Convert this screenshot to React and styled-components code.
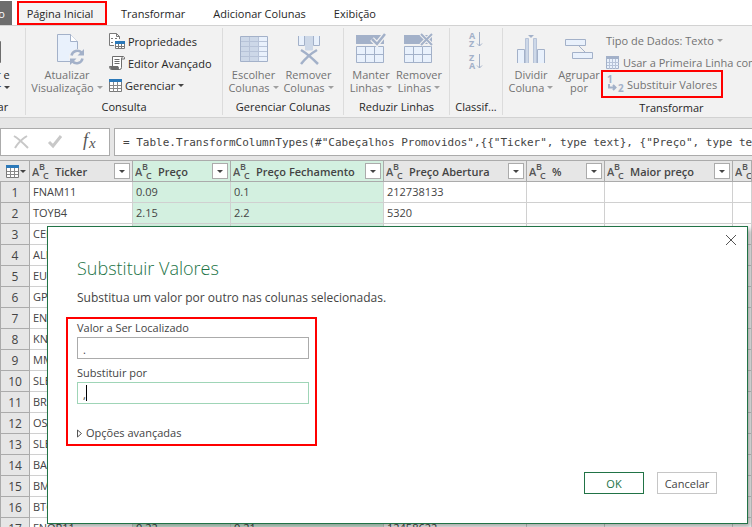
import React, { useState } from "react";
import styled, { createGlobalStyle, css } from "styled-components";

const line = "#a3b1c9";
const pale = "#e9f1fc";
const mid = "#cdd8e8";

const GlobalStyle = createGlobalStyle`
  * {
    box-sizing: border-box;
  }
  body {
    margin: 0;
    overflow: hidden;
    background: #e6e6e6;
  }
  body, button, input, table {
    font-family: "Open Sans", "Noto Sans", sans-serif;
    font-size: 11px;
    color: #262626;
  }
  button {
    border: 0;
    padding: 0;
    background: transparent;
  }
  svg {
    display: block;
    flex: none;
  }
`;

const Window = styled.div`
  position: relative;
  height: 100vh;
  overflow: hidden;
  display: flex;
  flex-direction: column;
`;

const Tabs = styled.nav`
  display: flex;
  flex: none;
  height: 26px;
  margin-left: -43px;
  padding-top: 1px;
  background: #fff;
  border-bottom: 1px solid #d2d2d2;
`;

const Tab = styled.button`
  flex: none;
  height: 24px;
  padding: 1px 14px 0;
  line-height: 23px;
  white-space: nowrap;

  ${(p) =>
    p.$file &&
    css`
      width: 55px;
      padding: 1px 8px 0;
      margin-right: 5px;
      text-align: right;
      color: #fff;
      background: #6d6d6d;
    `}

  ${(p) =>
    p.$active &&
    css`
      width: 90px;
      padding: 1px 4px 0 0;
      line-height: 19px;
      background: #f3f3f3;
      border: 2px solid #f00;
    `}
`;

const Ribbon = styled.div`
  display: flex;
  flex: none;
  height: 92px;
  margin-left: -43px;
  background: #f2f2f2;
  border-bottom: 1px solid #d2d2d2;
`;

const Group = styled.section`
  flex: none;
  display: flex;
  flex-direction: column;
  width: ${(p) => p.$width}px;
  margin: 2px 0;
  padding-top: 2px;
  border-right: 1px solid #dcdcdc;
`;

const GroupBody = styled.div`
  display: flex;
  height: 68px;
  padding-left: 3px;
`;

const GroupTitle = styled.h2`
  margin: 2px 0 0;
  font-size: 11px;
  font-weight: 400;
  line-height: 16px;
  text-align: center;
  white-space: nowrap;
`;

const BigButton = styled.button`
  flex: none;
  display: flex;
  flex-direction: column;
  align-items: center;
  width: ${(p) => p.$width}px;
  padding-top: 2px;
  line-height: 13px;
  white-space: nowrap;
  color: ${(p) => (p.disabled ? "#737373" : "#262626")};

  svg {
    margin-bottom: 2px;
  }
`;

const Line = styled.span`
  display: flex;
  align-items: center;
  gap: 3px;
`;

const SmallList = styled.div`
  display: flex;
  flex-direction: column;
  align-items: flex-start;
  margin-left: 4px;
`;

const SmallButton = styled.button`
  display: flex;
  align-items: center;
  gap: 3px;
  height: 22px;
  white-space: nowrap;
  color: ${(p) => (p.disabled ? "#737373" : "#262626")};
`;

const MarkedButton = styled(SmallButton)`
  height: 28px;
  margin: -3px 0 0 -5px;
  padding: 0 4px;
  border: 2px solid #f00;
`;

const SortList = styled.div`
  display: flex;
  flex-direction: column;
  gap: 6px;
  width: 100%;
  padding: 2px 4px 0 0;
  align-items: center;
`;

const Arrow = styled.i`
  flex: none;
  border: 3px solid transparent;
  border-top-color: ${(p) => (p.$dark ? "#444" : "#a0a0a0")};
  border-bottom: 0;
`;

const FormulaBar = styled.div`
  flex: none;
  display: flex;
  gap: 4px;
  height: 42px;
  padding: 10px 0 4px;
`;

const FormulaTools = styled.div`
  flex: none;
  display: flex;
  align-items: center;
  justify-content: space-between;
  width: 110px;
  padding: 0 12px;
  background: #fff;
  border: 1px solid #ababab;
`;

const Formula = styled.input`
  flex: 1;
  min-width: 0;
  padding: 0 0 0 8px;
  border: 1px solid #ababab;
  border-right: 0;
  border-radius: 0;
  outline: 0;
  font-family: "DejaVu Sans Mono", monospace;
  color: #444;
  background: #fff;
`;

const Grid = styled.table`
  width: 100%;
  table-layout: fixed;
  border-spacing: 0;
  background: #fff;
  color: #444;
`;

const HeadCell = styled.th`
  height: 22px;
  padding: 0 2px;
  overflow: hidden;
  text-align: left;
  font-weight: 600;
  background: ${(p) => (p.$selected ? "#d3f0e0" : "#e6e6e6")};
  border: solid #ababab;
  border-width: 1px 1px 1px 0;
`;

const HeadContent = styled.div`
  display: flex;
  align-items: center;
  gap: 5px;
  height: 20px;
  white-space: nowrap;
`;

const Corner = styled(HeadContent)`
  gap: 1px;
  padding-left: 4px;
`;

const FilterButton = styled.button`
  flex: none;
  display: flex;
  align-items: center;
  justify-content: center;
  width: 16px;
  height: 16px;
  margin-left: auto;
  background: #fff;
  border: 1px solid #ababab;
`;

const RowHead = styled.th`
  height: 21px;
  padding: 1px 0 0;
  font-size: 12px;
  font-weight: 400;
  line-height: 19px;
  text-align: center;
  background: #e6e6e6;
  border: solid #ababab;
  border-width: 0 1px 1px;
`;

const Cell = styled.td`
  height: 21px;
  padding: 0 3px 1px;
  line-height: 19px;
  white-space: nowrap;
  overflow: hidden;
  background: ${(p) => (p.$selected ? "#d3f0e0" : "#fff")};
  border: solid #d0d0d0;
  border-width: 0 1px 1px 0;
`;

const Dialog = styled.div`
  position: absolute;
  top: 226px;
  left: 47px;
  right: 4px;
  padding: 28px 30px 29px 18px;
  color: #444;
  background: #fff;
  border: 1px solid #217346;
  box-shadow: 3px 3px 5px rgba(0, 0, 0, 0.35);
`;

const CloseButton = styled.button`
  position: absolute;
  top: 7px;
  right: 10px;
`;

const DialogTitle = styled.h1`
  margin: 0 0 0 11px;
  font-size: 18px;
  font-weight: 300;
  line-height: 26px;
  color: #217346;
`;

const DialogText = styled.p`
  margin: 8px 0 10px 11px;
  font-size: 12px;
  line-height: 18px;
`;

const Fields = styled.div`
  width: 251px;
  padding: 0 6px 2px 9px;
  border: 2px solid #f00;
`;

const Label = styled.label`
  display: block;
  line-height: 18px;
`;

const Field = styled.div`
  position: relative;
  margin-bottom: ${(p) => (p.$last ? 20 : 5)}px;
`;

const TextBox = styled.input`
  display: block;
  width: 100%;
  height: 22px;
  padding: 2px 5px 0;
  border: 1px solid ${(p) => (p.$focused ? "#9fd5b7" : "#ababab")};
  border-radius: 0;
  outline: 0;
  color: #444;
`;

const Caret = styled.i`
  position: absolute;
  top: 3px;
  left: 9px;
  width: 1px;
  height: 16px;
  background: #000;
`;

const Advanced = styled.button`
  display: flex;
  align-items: center;
  gap: 4px;
  line-height: 18px;
  color: #444;
`;

const Actions = styled.div`
  display: flex;
  justify-content: flex-end;
  gap: 13px;
  margin-top: 26px;
`;

const ActionButton = styled.button`
  width: 60px;
  height: 22px;
  color: ${(p) => (p.$primary ? "#217346" : "#444")};
  border: 1px solid ${(p) => (p.$primary ? "#217346" : "#c6c6c6")};
`;

const CloseApplyIcon = () => (
  <svg width="28" height="34" viewBox="0 0 28 34" fill="#fff" stroke="#6d6d6d">
    <path d="M1.5 9.5h25v21h-25z" />
  </svg>
);

const RefreshIcon = () => (
  <svg width="34" height="34" viewBox="-7 0 34 34" fill="none">
    <path d="M.5 2.5h13l7 7v20H.5z" fill={pale} stroke={line} />
    <path d="M13.500 2.500v7h7" fill="#fff" stroke={line} />
    <circle cx="20" cy="25" r="8" fill="#f2f2f2" />
    <path d="M14.500 23.500c1-5 7-6 10-3M25.500 26.500c-1 5-7 6-10 3" stroke={line} strokeWidth="2.500" />
    <path d="M27 17v6.500h-6.500zM13 33v-6.500h6.500z" fill={line} />
  </svg>
);

const PropertiesIcon = () => (
  <svg width="16" height="16" viewBox="0 0 16 16" fill="none" stroke="#7a7a7a">
    <path d="M5 12.500H.5V.5h7l3 3V6M7.500.5v3h3" fill="#fff" />
    <path d="M2 5.500h2M2 9.500h2M6 5.500h2" />
    <path d="M6.500 8.500h9v7h-9zM7 13.500h8M9.500 10v5.500M12.500 10v5.500" fill="#fff" />
    <path d="M6 8h10v3H6z" fill="#2b79b9" stroke="none" />
  </svg>
);

const EditorIcon = () => (
  <svg width="16" height="16" viewBox="0 0 16 16" fill="none" stroke="#6d6d6d">
    <path d="M3.500 11V1.500h11q1 0 1 2.500h-3v8.500q0 2-2 2h-8q-2 0-2-3h8.500q0 3 1.500 3M12.500 4q0-2 1.500-2.500" fill="#fff" />
    <path d="M1 12h8.500v2.500H2z" fill="#6d6d6d" stroke="none" />
    <path d="M5.500 4.500h5M5.500 6.500h5M5.500 8.500h5" />
  </svg>
);

const TableIcon = () => (
  <svg width="13" height="13" viewBox="0 0 13 13" fill="none">
    <path d="M.5.5h12v12H.5z" fill="#fff" stroke="#7a7a7a" />
    <path d="M1 6.500h11M1 9.500h11M4.500 3v9.500M8.500 3v9.500" stroke="#8a8a8a" />
    <path d="M0 0h13v3H0z" fill="#2b79b9" />
  </svg>
);

const ChooseColumnsIcon = () => (
  <svg width="28" height="34" viewBox="0 0 28 34" fill="none">
    <path d="M.5 4.500h27v25H.5z" fill={pale} />
    <path d="M1 5h18v24H1z" fill={mid} />
    <path d="M1 9.500h26M1 14.500h26M1 19.500h26M1 24.500h26M9.500 5v24M18.500 5v24" stroke="#b7c3d8" />
    <path d="M.5 4.500h27v25H.5z" stroke={line} />
  </svg>
);

const RemoveColumnsIcon = () => (
  <svg width="22" height="34" viewBox="0 0 22 34" fill="none">
    <path d="M.5 4v9.500h6V4M21.500 4v9.500h-6V4" fill={pale} stroke={line} />
    <path d="M7.500 4v14h7V4" fill={mid} stroke={mid} />
    <path d="M3 18c5 3 11 8 17 14" stroke={line} strokeWidth="2.500" />
    <path d="M19 18C12 22 7 27 3 32" stroke={line} strokeWidth="2.500" />
  </svg>
);

const RowsIcon = ({ remove }) => (
  <svg width="30" height="34" viewBox="0 0 30 34" fill="none">
    <path d="M0 3h28v9H0z" fill={line} />
    <path d="M.5 14.500h27v16H.5zM.5 22.500h27M9.500 15v15M18.500 15v15" fill={pale} stroke={line} />
    {remove ? (
      <>
        <path d="m17 2 11 11M28 2 17 13" stroke="#f2f2f2" strokeWidth="4" />
        <path d="m17 2 11 11M28 2 17 13" stroke={line} strokeWidth="2" />
      </>
    ) : (
      <>
        <path d="m16 7 5 5 8-10" stroke="#f2f2f2" strokeWidth="5" />
        <path d="m16 7 5 5 8-10" stroke={line} strokeWidth="2.500" />
      </>
    )}
  </svg>
);

const SortIcon = ({ letters }) => (
  <svg width="16" height="16" viewBox="0 0 16 16" fill={line} fontFamily="Open Sans" fontSize="9" fontWeight="700">
    <text x="1" y="7">{letters[0]}</text>
    <text x="1" y="15">{letters[1]}</text>
    <path d="M11.500 0v14M9 11.500l2.500 2.500 2.500-2.500" fill="none" stroke={line} />
  </svg>
);

const SplitIcon = () => (
  <svg width="28" height="34" viewBox="0 0 28 34" fill="none">
    <path d="M.5 31V17.500h7V31M27.500 31V17.500h-7V31" fill={pale} stroke={line} />
    <path d="M8.500 31V6.500h3V31M19.500 31V6.500h-3V31" fill={mid} stroke="#b7c3d8" />
    <path d="M11 3h6l-3 3z" fill={line} />
  </svg>
);

const GroupByIcon = () => (
  <svg width="28" height="34" viewBox="0 0 28 34" fill={pale} stroke={line}>
    <path d="M.5 7.500h20v6H.5zM7.500 20.500h20v6h-20zM13.500 13.500l7 7" />
  </svg>
);

const HeaderIcon = () => (
  <svg width="14" height="14" viewBox="0 0 14 14" fill="none">
    <path d="M.5.5h12v12H.5z" fill={pale} stroke={line} />
    <path d="M0 0h13v3H0z" fill={line} />
    <path d="M1 6.500h12M1 9.500h12M3.500 3v10M6.500 3v10M9.500 3v10" stroke="#b7c3d8" />
  </svg>
);

const ReplaceIcon = () => (
  <svg width="17" height="18" viewBox="0 0 17 18" fill={line} fontFamily="Open Sans" fontSize="10" fontWeight="700">
    <text x="0" y="8">1</text>
    <text x="11" y="17">2</text>
    <path d="M2 9v3.500h6M6 10l2.500 2.500L6 15" fill="none" stroke={line} strokeWidth="2" />
  </svg>
);

const TypeIcon = () => (
  <svg width="18" height="20" viewBox="0 0 18 20" fill="#555" fontFamily="Open Sans" fontWeight="600">
    <text x="0" y="15" fontSize="11">A</text>
    <text x="7" y="9" fontSize="9">B</text>
    <text x="11" y="18" fontSize="9">C</text>
  </svg>
);

const columns = [
  { name: "Ticker", width: 103 },
  { name: "Preço", width: 98, selected: true },
  { name: "Preço Fechamento", width: 153, selected: true },
  { name: "Preço Abertura", width: 143 },
  { name: "%", width: 78 },
  { name: "Maior preço", width: 128 },
  { name: "" },
];

const rows = [
  ["FNAM11", "0.09", "0.1", "212738133"],
  ["TOYB4", "2.15", "2.2", "5320"],
  ["CEPE"],
  ["ALMI"],
  ["EUCA"],
  ["GPIV"],
  ["ENMA"],
  ["KNRE"],
  ["MMXM"],
  ["SLED"],
  ["BRIV"],
  ["OSXB"],
  ["SLED"],
  ["BAUH"],
  ["BMIN"],
  ["BTOW"],
  ["FNOR11", "0.22", "0.21", "12458622"],
];

export default function App() {
  const [find, setFind] = useState(".");
  const [replace, setReplace] = useState(",");

  return (
    <Window>
      <GlobalStyle />
      <Tabs>
        <Tab $file>Arquivo</Tab>
        <Tab $active>Página Inicial</Tab>
        <Tab>Transformar</Tab>
        <Tab>Adicionar Colunas</Tab>
        <Tab>Exibição</Tab>
      </Tabs>

      <Ribbon>
        <Group $width={69}>
          <GroupBody>
            <BigButton $width={56}>
              <CloseApplyIcon />
              <Line>Fechar e</Line>
              <Line>Aplicar <Arrow $dark /></Line>
            </BigButton>
          </GroupBody>
          <GroupTitle>Fechar</GroupTitle>
        </Group>

        <Group $width={197}>
          <GroupBody>
            <BigButton $width={76} disabled>
              <RefreshIcon />
              <Line>Atualizar</Line>
              <Line>Visualização <Arrow /></Line>
            </BigButton>
            <SmallList>
              <SmallButton><PropertiesIcon />Propriedades</SmallButton>
              <SmallButton><EditorIcon />Editor Avançado</SmallButton>
              <SmallButton><TableIcon />Gerenciar <Arrow $dark /></SmallButton>
            </SmallList>
          </GroupBody>
          <GroupTitle>Consulta</GroupTitle>
        </Group>

        <Group $width={121}>
          <GroupBody>
            <BigButton $width={55} disabled>
              <ChooseColumnsIcon />
              <Line>Escolher</Line>
              <Line>Colunas <Arrow /></Line>
            </BigButton>
            <BigButton $width={55} disabled>
              <RemoveColumnsIcon />
              <Line>Remover</Line>
              <Line>Colunas <Arrow /></Line>
            </BigButton>
          </GroupBody>
          <GroupTitle>Gerenciar Colunas</GroupTitle>
        </Group>

        <Group $width={106}>
          <GroupBody>
            <BigButton $width={48} disabled>
              <RowsIcon />
              <Line>Manter</Line>
              <Line>Linhas <Arrow /></Line>
            </BigButton>
            <BigButton $width={48} disabled>
              <RowsIcon remove />
              <Line>Remover</Line>
              <Line>Linhas <Arrow /></Line>
            </BigButton>
          </GroupBody>
          <GroupTitle>Reduzir Linhas</GroupTitle>
        </Group>

        <Group $width={53}>
          <GroupBody>
            <SortList>
              <button aria-label="Classificar em ordem crescente"><SortIcon letters="AZ" /></button>
              <button aria-label="Classificar em ordem decrescente"><SortIcon letters="ZA" /></button>
            </SortList>
          </GroupBody>
          <GroupTitle>Classif...</GroupTitle>
        </Group>

        <Group $width={338}>
          <GroupBody>
            <BigButton $width={50} disabled>
              <SplitIcon />
              <Line>Dividir</Line>
              <Line>Coluna <Arrow /></Line>
            </BigButton>
            <BigButton $width={46} disabled>
              <GroupByIcon />
              <Line>Agrupar</Line>
              <Line>por</Line>
            </BigButton>
            <SmallList>
              <SmallButton disabled>Tipo de Dados: Texto <Arrow /></SmallButton>
              <SmallButton disabled><HeaderIcon />Usar a Primeira Linha como Cabeçalho</SmallButton>
              <MarkedButton disabled><ReplaceIcon />Substituir Valores</MarkedButton>
            </SmallList>
          </GroupBody>
          <GroupTitle>Transformar</GroupTitle>
        </Group>
      </Ribbon>

      <FormulaBar>
        <FormulaTools>
          <button aria-label="Cancelar fórmula">
            <svg width="16" height="16" viewBox="0 0 16 16" fill="none" stroke="#c8c8c8" strokeWidth="2">
              <path d="M1 2c5 3 9 7 14 12M14 2C9 5 5 9 2 14" />
            </svg>
          </button>
          <button aria-label="Confirmar fórmula">
            <svg width="16" height="16" viewBox="0 0 16 16" fill="none" stroke="#c8c8c8" strokeWidth="3">
              <path d="m2 8 4 4 8-10" />
            </svg>
          </button>
          <svg width="16" height="20" viewBox="0 0 16 20" fill="#555" fontFamily="Liberation Serif" fontStyle="italic">
            <text x="2" y="14" fontSize="18">f</text>
            <text x="8" y="16" fontSize="15">x</text>
          </svg>
        </FormulaTools>
        <Formula
          aria-label="Fórmula"
          readOnly
          value={'= Table.TransformColumnTypes(#"Cabeçalhos Promovidos",{{"Ticker", type text}, {"Preço", type text}})'}
        />
      </FormulaBar>

      <Grid>
        <colgroup>
          <col width="30" />
          {columns.map((c, i) => (
            <col key={i} width={c.width} />
          ))}
        </colgroup>
        <thead>
          <tr>
            <HeadCell>
              <Corner>
                <TableIcon />
                <Arrow $dark />
              </Corner>
            </HeadCell>
            {columns.map((c, i) => (
              <HeadCell key={i} $selected={c.selected}>
                <HeadContent>
                  <TypeIcon />
                  {c.name}
                  {c.name && (
                    <FilterButton aria-label={`Filtrar ${c.name}`}>
                      <Arrow $dark />
                    </FilterButton>
                  )}
                </HeadContent>
              </HeadCell>
            ))}
          </tr>
        </thead>
        <tbody>
          {rows.map((row, r) => (
            <tr key={r}>
              <RowHead>{r + 1}</RowHead>
              {columns.map((c, i) => (
                <Cell key={i} $selected={c.selected}>{row[i]}</Cell>
              ))}
            </tr>
          ))}
        </tbody>
      </Grid>

      <Dialog role="dialog" aria-labelledby="dialog-title">
        <CloseButton aria-label="Fechar">
          <svg width="12" height="12" viewBox="0 0 12 12" stroke="#555">
            <path d="m1 1 10 10M11 1 1 11" />
          </svg>
        </CloseButton>
        <DialogTitle id="dialog-title">Substituir Valores</DialogTitle>
        <DialogText>Substitua um valor por outro nas colunas selecionadas.</DialogText>
        <Fields>
          <Label htmlFor="find">Valor a Ser Localizado</Label>
          <Field>
            <TextBox id="find" value={find} onChange={(e) => setFind(e.target.value)} />
          </Field>
          <Label htmlFor="replace">Substituir por</Label>
          <Field $last>
            <TextBox id="replace" $focused value={replace} onChange={(e) => setReplace(e.target.value)} />
            <Caret />
          </Field>
          <Advanced>
            <svg width="5" height="9" viewBox="0 0 5 9" fill="none" stroke="#555">
              <path d="M.5 1v7l4-3.500z" />
            </svg>
            Opções avançadas
          </Advanced>
        </Fields>
        <Actions>
          <ActionButton $primary>OK</ActionButton>
          <ActionButton>Cancelar</ActionButton>
        </Actions>
      </Dialog>
    </Window>
  );
}
